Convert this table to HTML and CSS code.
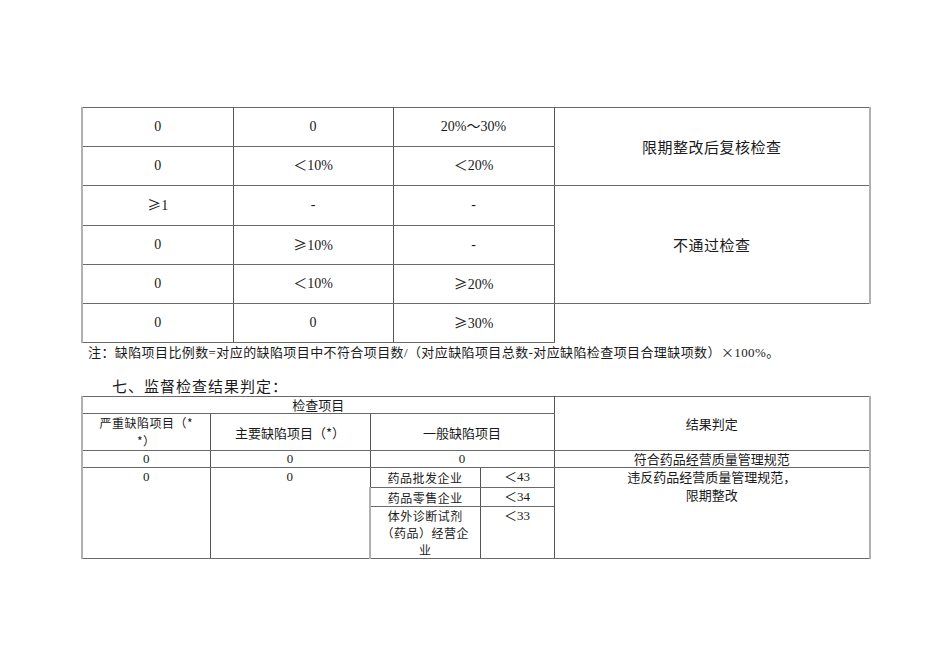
FILE: index.html
```html
<!DOCTYPE html>
<html lang="zh-CN">
<head>
<meta charset="utf-8">
<title>监督检查结果判定</title>
<link rel="stylesheet" href="styles.css">
</head>
<body>
<div class="page">
  <table class="t1">
    <colgroup><col class="a1"><col class="a2"><col class="a3"><col class="a4"></colgroup>
    <tr><td>0</td><td>0</td><td>20%～30%</td><td rowspan="2" class="cn last">限期整改后复核检查</td></tr>
    <tr><td>0</td><td>＜10%</td><td>＜20%</td></tr>
    <tr><td><span class="sym">≥</span>1</td><td>-</td><td>-</td><td rowspan="3" class="cn last">不通过检查</td></tr>
    <tr><td>0</td><td><span class="sym">≥</span>10%</td><td>-</td></tr>
    <tr><td>0</td><td>＜10%</td><td><span class="sym">≥</span>20%</td></tr>
    <tr><td>0</td><td>0</td><td><span class="sym">≥</span>30%</td></tr>
  </table>
  <p class="note">注：缺陷项目比例数=对应的缺陷项目中不符合项目数/（对应缺陷项目总数-对应缺陷检查项目合理缺项数）<span class="times">×</span>100%。</p>
  <h2 class="heading">七、监督检查结果判定：</h2>
  <table class="t2">
    <colgroup><col class="b1"><col class="b2"><col class="b3"><col class="b4"><col class="b5"></colgroup>
    <tr class="r1"><td colspan="4" class="cj">检查项目</td><td rowspan="2" class="cj last">结果判定</td></tr>
    <tr class="r2"><td class="cj two">严重缺陷项目（*<br>*）</td><td class="cj">主要缺陷项目（*）</td><td colspan="2" class="cj">一般缺陷项目</td></tr>
    <tr class="r3"><td>0</td><td>0</td><td colspan="2">0</td><td class="cj last">符合药品经营质量管理规范</td></tr>
    <tr class="r4"><td rowspan="3" class="top">0</td><td rowspan="3" class="top">0</td><td class="sm">药品批发企业</td><td class="top">＜43</td><td rowspan="3" class="top cj last">违反药品经营质量管理规范，<br>限期整改</td></tr>
    <tr class="r5"><td class="sm">药品零售企业</td><td class="top">＜34</td></tr>
    <tr class="r6"><td class="sm top">体外诊断试剂<br>（药品）经营企<br>业</td><td class="top">＜33</td></tr>
  </table>
</div>
</body>
</html>
```

FILE: styles.css
```css
html, body {
  margin: 0;
  padding: 0;
  background: #ffffff;
}
body {
  font-family: "Liberation Serif", "Noto Sans CJK SC", serif;
  color: #1a1a1a;
}
.page {
  padding: 107px 0 0 81px;
  width: 788px;
}
table {
  border-collapse: collapse;
  table-layout: fixed;
  width: 788px;
}
td {
  padding: 0;
  text-align: center;
  vertical-align: middle;
  border-top: 1px solid #6a6a6a;
  border-bottom: 1px solid #6a6a6a;
  border-left: 1px solid #555555;
  border-right: 1px solid #555555;
}
td:first-child {
  border-left: 2px solid #b0b0b0;
}
td.last {
  border-right: 2px solid #b0b0b0;
}
.t1 td {
  height: 38.2px;
  font-size: 14px;
  line-height: 18px;
}
.a1 { width: 151px; }
.a2 { width: 160px; }
.a3 { width: 161px; }
.a4 { width: 316px; }
.t1 .cn {
  font-family: "Noto Sans CJK SC", sans-serif;
  font-size: 15px;
  letter-spacing: 0.5px;
}
.sym {
  font-family: "Noto Sans CJK SC", sans-serif;
  font-size: 14px;
}
.note {
  margin: 0;
  padding-left: 7px;
  font-size: 13px;
  line-height: 18px;
  letter-spacing: 0.4px;
  white-space: nowrap;
}
.times {
  font-family: "Noto Sans CJK SC", sans-serif;
}
.heading {
  margin: 14px 0 0 0;
  padding-left: 31px;
  font-family: "Noto Sans CJK SC", sans-serif;
  font-weight: normal;
  font-size: 15px;
  line-height: 20px;
  letter-spacing: 1px;
}
.t2 td {
  font-size: 13px;
  line-height: 16px;
}
.t2 td.cj,
.t2 td.sm {
  font-family: "Noto Sans CJK SC", sans-serif;
}
.b1 { width: 128px; }
.b2 { width: 160px; }
.b3 { width: 110px; }
.b4 { width: 74px; }
.b5 { width: 316px; }
.t2 .r1 td { height: 16px; }
.t2 .r2 td { height: 35px; line-height: 17px; }
.t2 .r2 td.two {
  font-size: 12px;
  letter-spacing: 0.5px;
  line-height: 18px;
}
.t2 .r3 td { height: 16px; }
.t2 .r4 td { height: 19px; }
.t2 .r5 td { height: 15px; }
.t2 .r6 td { height: 51px; }
.t2 td.top {
  vertical-align: top;
  line-height: 18px;
}
.t2 td.sm {
  font-size: 12px;
  letter-spacing: 0.5px;
  line-height: 15px;
}
.t2 td.sm.top {
  line-height: 17px;
}
```
